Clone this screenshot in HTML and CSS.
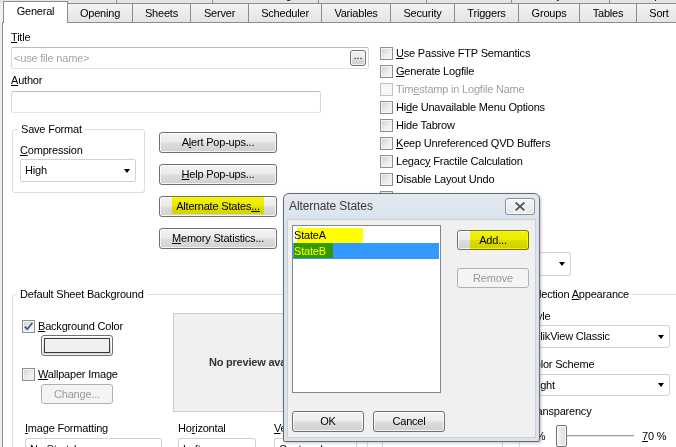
FILE: index.html
```html
<!DOCTYPE html>
<html>
<head>
<meta charset="utf-8">
<title>Document Properties</title>
<link rel="stylesheet" href="styles.css">
</head>
<body>
<div class="window">
  <div class="tabs-back">
    <div class="btab b1"><span>Presentation</span></div>
    <div class="btab b2"><span>Number</span></div>
    <div class="btab b3"><span>Scrambling</span></div>
    <div class="btab b4"><span>Extensions</span></div>
    <div class="btab b5"><span>Macro</span></div>
    <div class="btab b6"><span>Layout</span></div>
    <div class="btab b7"><span>Script</span></div>
  </div>
  <div class="tabs">
    <div class="tab active t-general">General</div>
    <div class="tab t-opening">Opening</div>
    <div class="tab t-sheets">Sheets</div>
    <div class="tab t-server">Server</div>
    <div class="tab t-scheduler">Scheduler</div>
    <div class="tab t-variables">Variables</div>
    <div class="tab t-security">Security</div>
    <div class="tab t-triggers">Triggers</div>
    <div class="tab t-groups">Groups</div>
    <div class="tab t-tables">Tables</div>
    <div class="tab t-sort">Sort</div>
  </div>
  <div class="panel">
    <div class="top">
      <div class="left-col">
        <div class="label title-label"><u>T</u>itle</div>
        <div class="field title-field"><span class="placeholder">&lt;use file name&gt;</span><span class="btn dots">...</span></div>
        <div class="label author-label"><u>A</u>uthor</div>
        <div class="field author-field"></div>
        <div class="format-row">
          <fieldset class="group save-format">
            <legend>Save Format</legend>
            <div class="label"><u>C</u>ompression</div>
            <div class="select sf-select"><span>High</span><i class="arrow"></i></div>
          </fieldset>
          <div class="btn-col">
            <div class="btn wide">A<u>l</u>ert Pop-ups...</div>
            <div class="btn wide"><u>H</u>elp Pop-ups...</div>
            <div class="btn wide">Alternate States<u>...</u></div>
            <div class="btn wide"><u>M</u>emory Statistics...</div>
          </div>
        </div>
      </div>
      <div class="right-col">
        <div class="check"><span class="box"></span><span><u>U</u>se Passive FTP Semantics</span></div>
        <div class="check"><span class="box"></span><span><u>G</u>enerate Logfile</span></div>
        <div class="check disabled"><span class="box"></span><span>Tim<u>e</u>stamp in Logfile Name</span></div>
        <div class="check"><span class="box"></span><span>Hi<u>d</u>e Unavailable Menu Options</span></div>
        <div class="check"><span class="box"></span><span>Hide Tabrow</span></div>
        <div class="check"><span class="box"></span><span><u>K</u>eep Unreferenced QVD Buffers</span></div>
        <div class="check"><span class="box"></span><span>Legac<u>y</u> Fractile Calculation</span></div>
        <div class="check"><span class="box"></span><span>Disable Layout Undo</span></div>
        <div class="check"><span class="box"></span><span>Use WebView in Layout</span></div>
        <div class="check"><span class="box"></span></div>
        <div class="label styling-label"></div>
        <div class="select styling-select"><span></span><i class="arrow"></i></div>
      </div>
    </div>
    <div class="bottom">
      <fieldset class="group dsb">
        <legend>Default Sheet Background</legend>
        <div class="dsb-main">
          <div class="dsb-left">
            <div class="check bg-row"><span class="box checked"><svg width="11" height="11" viewBox="0 0 11 11"><path d="M1.8 5.6 L4.3 8.2 L9.4 1.8" fill="none" stroke="#3e5797" stroke-width="1.7"/></svg></span><span><u>B</u>ackground Color</span></div>
            <div class="btn color-btn"><span class="swatch"></span></div>
            <div class="check wall-row"><span class="box"></span><span><u>W</u>allpaper Image</span></div>
            <div class="btn disabled change-btn">Chan<u>g</u>e...</div>
          </div>
          <div class="preview">No preview available</div>
        </div>
        <div class="dsb-fmt">
          <div class="fmt f1"><div class="label"><u>I</u>mage Formatting</div><div class="select"><span>No Stretch</span><i class="arrow"></i></div></div>
          <div class="fmt f2"><div class="label">Ho<u>r</u>izontal</div><div class="select"><span>Left</span><i class="arrow"></i></div></div>
          <div class="fmt f3"><div class="label"><u>V</u>ertical</div><div class="select"><span>Centered</span><i class="arrow"></i></div></div>
        </div>
      </fieldset>
      <div class="mid">
        <div class="label"></div>
        <div class="select"><span></span><i class="arrow"></i></div>
      </div>
      <fieldset class="group sa">
        <legend>Selection <u>A</u>ppearance</legend>
        <div class="label">Style</div>
        <div class="select sa-select"><span>QlikView Classic</span><i class="arrow"></i></div>
        <div class="label sa-label2">Color Scheme</div>
        <div class="select sa-select sa-select2"><span>Light</span><i class="arrow"></i></div>
        <div class="label sa-label3">Transparency</div>
        <div class="slider">
          <span class="slider-min">0 %</span>
          <span class="thumb"></span>
          <span class="track"></span>
          <span class="slider-val"><u>7</u>0 %</span>
        </div>
      </fieldset>
    </div>
  </div>

  <div class="dialog">
    <div class="titlebar">
      <span class="dlg-title">Alternate States</span>
      <span class="close"><svg width="28" height="15" viewBox="0 0 28 15"><path d="M9.5 3.5 L18.5 11.5 M18.5 3.5 L9.5 11.5" stroke="#ffffff" stroke-width="4" stroke-linecap="round"/><path d="M9.5 3.5 L18.5 11.5 M18.5 3.5 L9.5 11.5" stroke="#5c5c5c" stroke-width="2"/></svg></span>
    </div>
    <div class="client">
      <div class="dlg-main">
        <div class="listbox">
          <div class="item">StateA</div>
          <div class="item selected">StateB</div>
        </div>
        <div class="dlg-btns">
          <div class="btn dbtn">Add...</div>
          <div class="btn dbtn disabled remove">Remove</div>
        </div>
      </div>
      <div class="dlg-foot">
        <div class="btn dbtn ok">OK</div>
        <div class="btn dbtn cancel">Cancel</div>
      </div>
    </div>
  </div>

  <div class="hl hl-alt"></div>
  <div class="hl hl-a"></div>
  <div class="hl hl-b"></div>
  <div class="hl hl-add"></div>
</div>
</body>
</html>
```
FILE: styles.css
```css
* { box-sizing: border-box; }
html, body { margin: 0; padding: 0; }
body {
  font-family: "Liberation Sans", Arial, sans-serif;
  font-size: 11px;
  line-height: 13px;
  letter-spacing: -0.2px;
  color: #000;
  background: #f0f0f0;
}
u { text-decoration: underline; text-underline-offset: 1px; }

.window {
  position: relative;
  width: 676px;
  height: 447px;
  overflow: hidden;
  background: #f0f0f0;
}

/* back row of tabs */
.tabs-back { display: flex; height: 3px; overflow: hidden; }
.btab {
  flex: none;
  height: 3px;
  border-right: 1px solid #898c95;
  background: #e4e4e4;
  text-align: center;
  overflow: hidden;
}
.btab span { display: block; margin-top: -11px; }
.b1 { width: 117px; }
.b2 { width: 96px; }
.b3 { width: 106px; }
.b4 { width: 108px; }
.b5 { width: 85px; }
.b6 { width: 98px; }
.b7 { width: 80px; }

/* front row of tabs */
.tabs {
  display: flex;
  align-items: flex-end;
  height: 21px;
  margin-top: -2px;
}
.tab {
  flex: none;
  height: 19px;
  padding-top: 3px;
  text-align: center;
  border-top: 1px solid #898c95;
  border-right: 1px solid #898c95;
  background: linear-gradient(#f4f4f4, #e3e3e3);
}
.tab.active {
  position: relative;
  z-index: 1;
  height: 22px;
  margin-bottom: -1px;
  margin-left: 3px;
  padding-top: 3px;
  border-left: 1px solid #898c95;
  background: #fff;
}
.t-general { width: 65px; }
.t-opening { width: 65px; }
.t-sheets { width: 58px; }
.t-server { width: 58px; }
.t-scheduler { width: 73px; }
.t-variables { width: 69px; }
.t-security { width: 64px; }
.t-triggers { width: 64px; }
.t-groups { width: 61px; }
.t-tables { width: 57px; }
.t-sort { width: 45px; }

.panel {
  margin-left: 2px;
  width: 700px;
  height: 430px;
  background: #fff;
  border-top: 1px solid #898c95;
  border-left: 1px solid #898c95;
}

.top { display: flex; align-items: flex-start; }
.left-col { padding-left: 8px; padding-top: 8px; width: 366px; flex: none; }
.label { height: 13px; white-space: nowrap; }

.field {
  background: #fff;
  border: 1px solid;
  border-color: #b9bdc4 #d7dae0 #dfe3e8 #d7dae0;
  border-radius: 2px;
  height: 22px;
}
.title-field {
  margin-top: 3px;
  width: 358px;
  display: flex;
  align-items: center;
  justify-content: space-between;
  padding: 0 2px 0 2px;
}
.placeholder { color: #a4a4a4; }
.author-label { margin-top: 5px; }
.author-field { margin-top: 4px; width: 310px; }

.btn {
  display: flex;
  align-items: center;
  justify-content: center;
  white-space: nowrap;
  border: 1px solid #707070;
  border-radius: 3px;
  background: linear-gradient(#f3f3f3 0%, #ebebeb 48%, #dddddd 52%, #d0d0d0 100%);
  box-shadow: inset 0 0 0 1px rgba(255, 255, 255, 0.75);
}
.btn.disabled {
  color: #9a9a9a;
  border-color: #adb2b5;
  background: #f4f4f4;
  box-shadow: none;
}
.dots {
  width: 16px;
  height: 16px;
  padding-bottom: 3px;
  align-items: flex-end;
  letter-spacing: 0;
  font-size: 10px;
}

.format-row { display: flex; align-items: flex-start; margin-top: 10px; }

.group {
  margin: 0;
  min-width: 0;
  border: 1px solid #d5dfe5;
  border-radius: 3px;
}
.group legend { padding: 0 3px; height: 13px; white-space: nowrap; }

.save-format {
  margin-left: 1px;
  width: 133px;
  padding: 8px 8px 10px 7px;
}
.save-format legend { margin-left: -2px; }

.select {
  display: flex;
  align-items: center;
  justify-content: space-between;
  height: 22px;
  background: #fff;
  border: 1px solid #cfd2d6;
  border-radius: 2px;
  padding: 0 5px 0 4px;
  white-space: nowrap;
  overflow: hidden;
}
.arrow {
  flex: none;
  width: 0;
  height: 0;
  border-left: 3.5px solid transparent;
  border-right: 3.5px solid transparent;
  border-top: 4px solid #000;
}
.sf-select { margin-top: 2px; width: 116px; height: 23px; }

.btn-col { margin-left: 14px; margin-top: 9px; display: flex; flex-direction: column; gap: 11px; }
.btn.wide { width: 118px; height: 21px; }

.right-col { margin-left: 11px; margin-top: 21px; flex: none; width: 300px; }
.check { display: flex; align-items: center; height: 18px; white-space: nowrap; }
.box {
  flex: none;
  width: 13px;
  height: 13px;
  margin-right: 3px;
  border: 1px solid #8e8f8f;
  background: linear-gradient(135deg, #cdd0d4 0%, #eceeef 60%, #f8f8f8 100%);
  box-shadow: inset 0 0 0 1px #f4f4f4;
  display: flex;
  align-items: center;
  justify-content: center;
}
.check.disabled { color: #a0a0a0; }
.check.disabled .box { border-color: #c3c3c3; background: #f6f6f6; }
.styling-label { margin-top: 8px; }
.styling-select { margin-top: 7px; width: 191px; height: 24px; }

/* bottom */
.bottom { display: flex; align-items: flex-start; margin-top: 12px; }
.dsb {
  margin-left: 9px;
  width: 356px;
  flex: none;
  padding: 12px 0 0 9px;
  height: 200px;
}
.dsb legend { margin-left: -5px; }
.dsb-main { display: flex; align-items: flex-start; }
.dsb-left { width: 151px; flex: none; }
.bg-row { margin-top: 4px; }
.color-btn { margin-left: 19px; width: 72px; height: 21px; padding: 2px; }
.swatch { display: block; width: 100%; height: 100%; border: 1px solid #3a3a3a; background: #f0f0f0; }
.wall-row { margin-top: 9px; }
.change-btn { margin-left: 19px; margin-top: 1px; width: 72px; height: 20px; }
.preview {
  width: 176px;
  height: 99px;
  flex: none;
  background: #f0f0f0;
  border: 1px solid #cccccc;
  display: flex;
  align-items: center;
  justify-content: center;
  font-weight: bold;
  color: #333;
  white-space: nowrap;
}
.dsb-fmt { display: flex; margin-top: 10px; }
.fmt .select { margin-top: 3px; }
.f1 { margin-left: 3px; width: 137px; }
.f2 { margin-left: 16px; width: 78px; }
.f3 { margin-left: 18px; width: 83px; }

.mid { margin-left: 14px; margin-top: 134px; width: 121px; flex: none; }
.mid .select { margin-top: 3px; }

.sa {
  margin-left: 16px;
  width: 200px;
  flex: none;
  padding: 9px 0 0 7px;
  height: 200px;
}
.sa legend { margin-left: -4px; }
.sa-select { margin-top: 2px; width: 143px; height: 23px; }
.sa-label2 { margin-top: 10px; }
.sa-select2 { margin-top: 3px; height: 22px; }
.sa-label3 { margin-top: 9px; }
.slider { display: flex; align-items: center; height: 22px; margin-top: 7px; }
.slider-min { width: 29px; flex: none; }
.thumb {
  flex: none;
  width: 11px;
  height: 22px;
  border: 1px solid #707070;
  border-radius: 2px;
  background: linear-gradient(90deg, #f4f4f4, #dcdcdc);
  box-shadow: inset 0 0 0 1px #fff;
}
.track {
  flex: none;
  width: 67px;
  height: 3px;
  border-top: 1px solid #9c9c9c;
  border-bottom: 1px solid #ffffff;
  background: #e2e2e2;
}
.slider-val { margin-left: 8px; white-space: nowrap; }

/* dialog */
.dialog {
  position: absolute;
  left: 283px;
  top: 193px;
  z-index: 3;
  width: 257px;
  height: 249px;
  border: 1px solid #6b6b6b;
  border-radius: 6px 6px 2px 2px;
  background: linear-gradient(#e4eaf2, #d9e2ec 30px, #dce3eb);
  box-shadow: 1px 1px 3px rgba(0, 0, 0, 0.25);
  display: flex;
  flex-direction: column;
}
.titlebar {
  height: 25px;
  flex: none;
  display: flex;
  justify-content: space-between;
  align-items: flex-start;
  padding: 0 4px 0 5px;
}
.dlg-title {
  margin-top: 6px;
  font-size: 12px;
  color: #3b3b3b;
  letter-spacing: -0.1px;
}
.close {
  margin-top: 4px;
  width: 30px;
  height: 17px;
  border: 1px solid #8a8f96;
  border-radius: 3px;
  background: linear-gradient(#f5f7f9, #e1e6ec);
  box-shadow: inset 0 0 0 1px rgba(255, 255, 255, 0.8);
  display: flex;
}
.client {
  flex: 1;
  margin: 0 3px 3px 3px;
  background: #f0f0f0;
  border: 1px solid #c9d1da;
  padding: 5px 0 0 4px;
  display: flex;
  flex-direction: column;
}
.dlg-main { display: flex; align-items: flex-start; }
.listbox {
  width: 149px;
  height: 168px;
  flex: none;
  background: #fff;
  border: 1px solid #828790;
  padding: 1px 1px 0 0;
}
.item { height: 16px; line-height: 16px; padding-left: 1px; white-space: nowrap; }
.item.selected { background: #3399ff; color: #fff; }
.dlg-btns { margin-left: 16px; padding-top: 5px; display: flex; flex-direction: column; gap: 18px; }
.dbtn { width: 72px; height: 20px; }
.dlg-foot { display: flex; gap: 9px; margin-top: 18px; }
.ok, .cancel { height: 21px; }

/* highlighter marks */
.hl {
  position: absolute;
  z-index: 5;
  background: #ffff00;
  mix-blend-mode: multiply;
}
.hl-alt { left: 172px; top: 197px; width: 92px; height: 17px; }
.hl-a { left: 297px; top: 228px; width: 66px; height: 15px; }
.hl-b { left: 294px; top: 243px; width: 39px; height: 15px; }
.hl-add { left: 470px; top: 231px; width: 59px; height: 19px; }
```
